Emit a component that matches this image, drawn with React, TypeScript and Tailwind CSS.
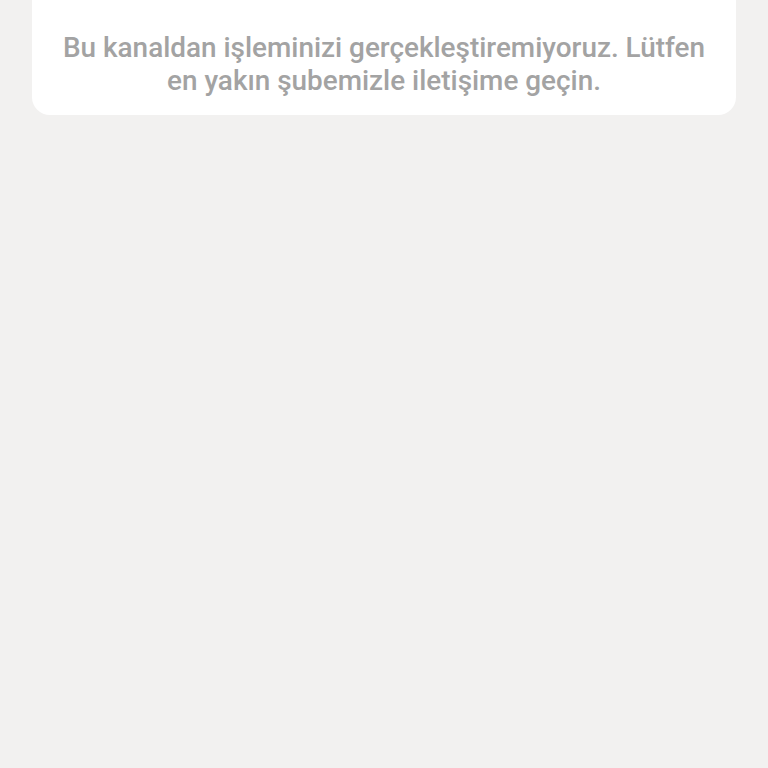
import React from 'react';

export default function App() {
    return (
        <div className="min-h-[768px] w-full bg-[#f2f1f0] px-8" style={{ fontFamily: 'Roboto, "Noto Sans", sans-serif' }}>
            <div className="bg-white rounded-b-[18px] pt-[31px] pb-[18px] px-6">
                <p className="text-center text-[27.9px] leading-[33px] font-medium text-[#a3a3a3]">
                    Bu kanaldan işleminizi gerçekleştiremiyoruz. Lütfen en yakın şubemizle iletişime geçin.
                </p>
            </div>
        </div>
    );
}
